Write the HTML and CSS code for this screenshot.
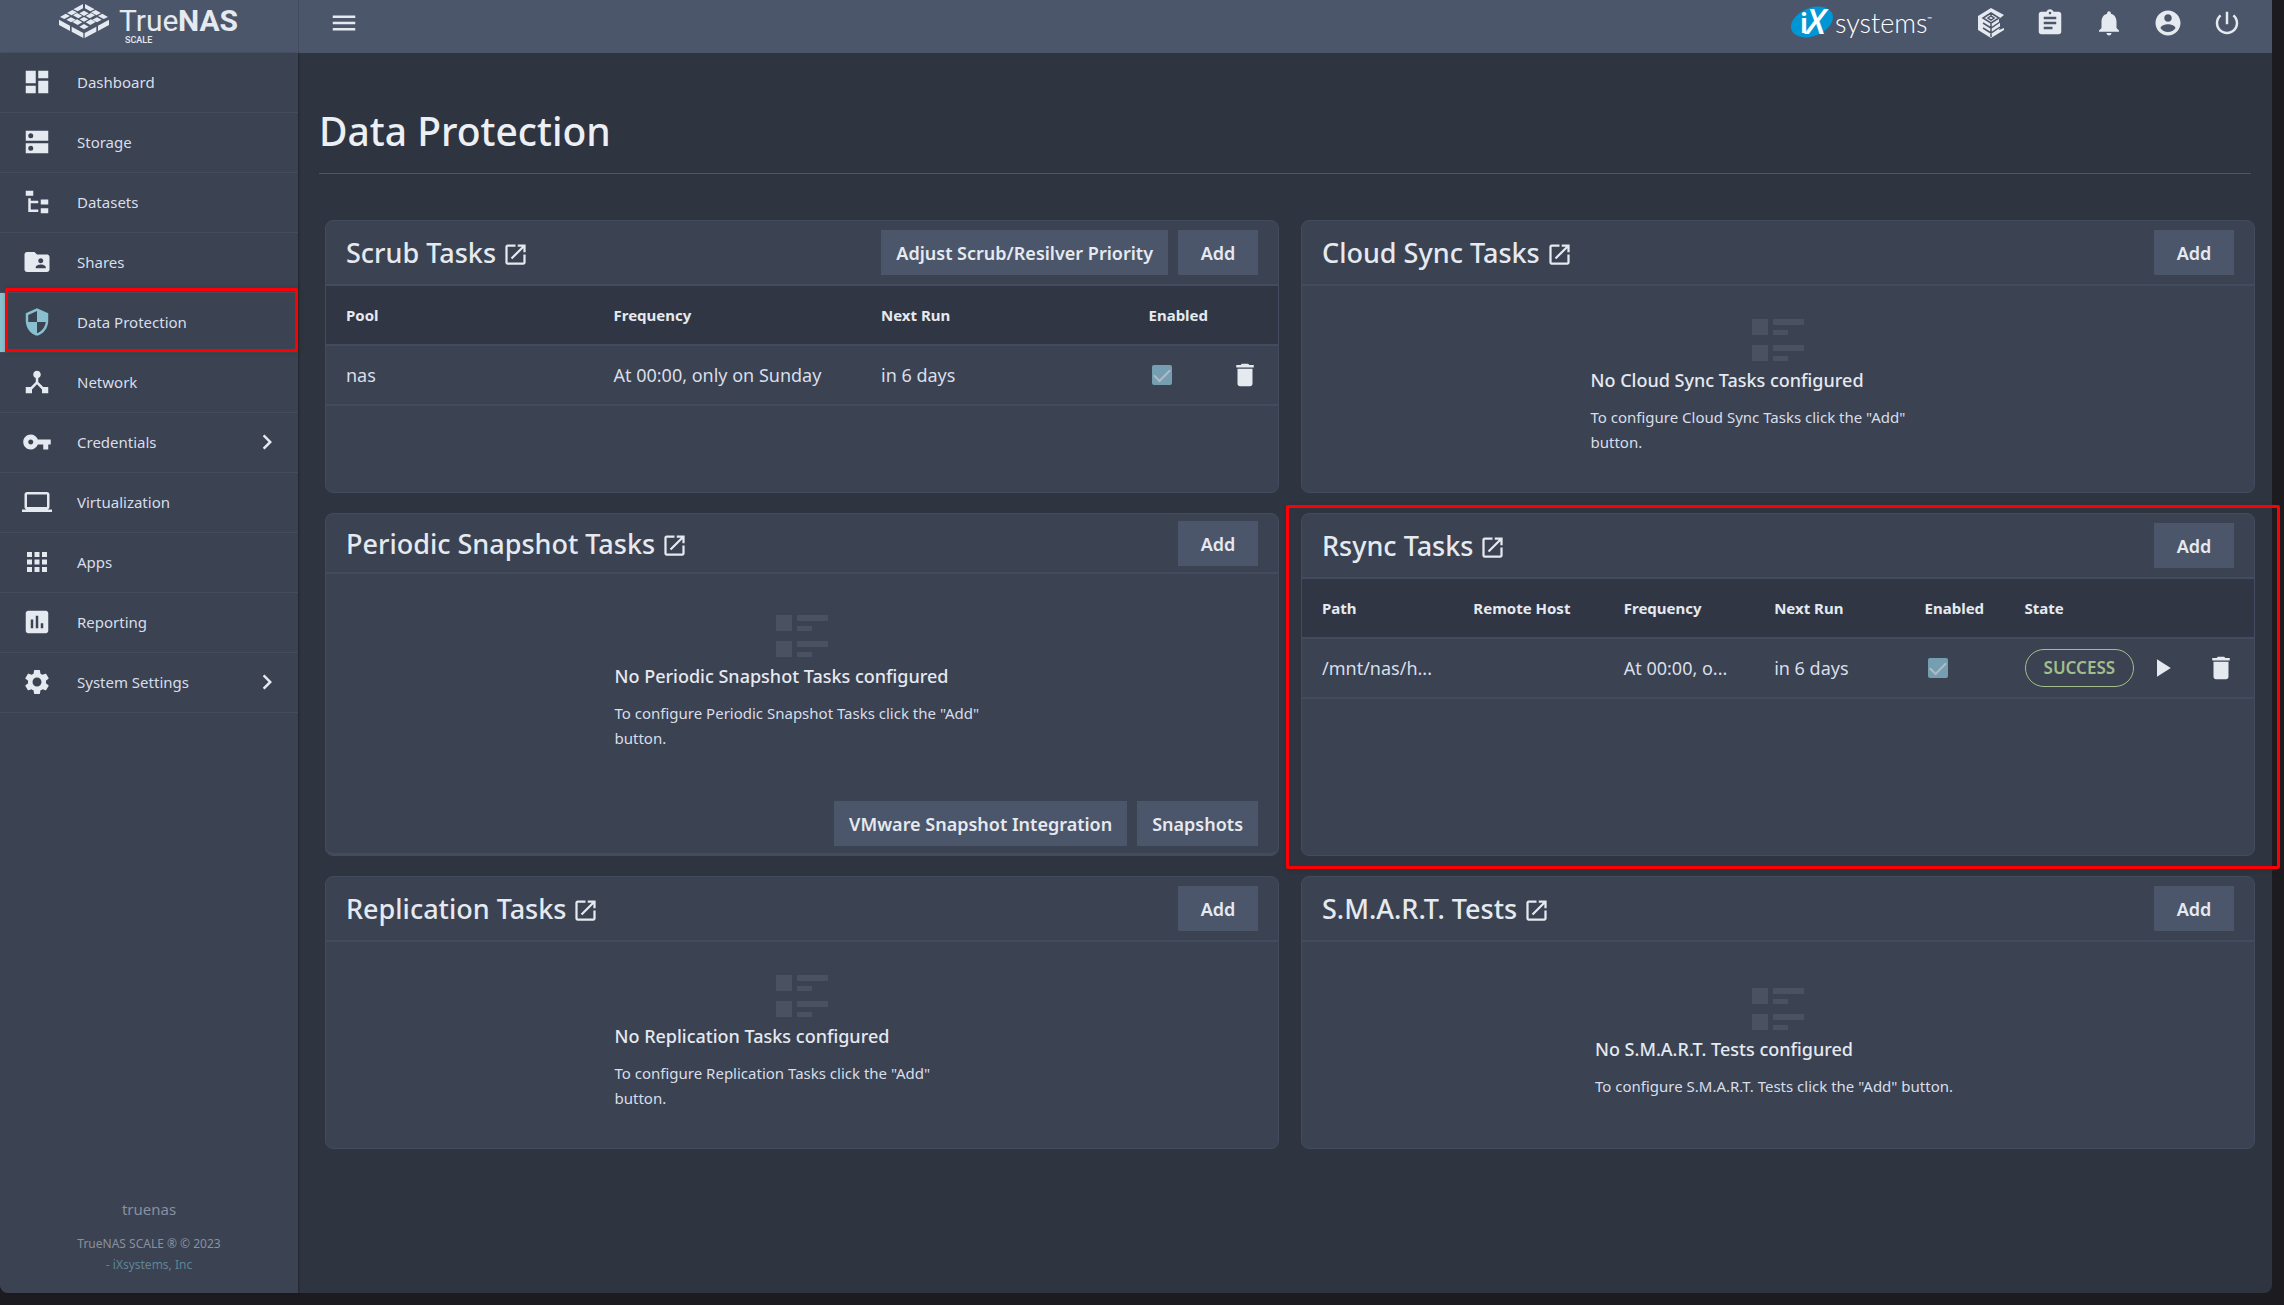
FILE: index.html
```html
<!DOCTYPE html>
<html lang="en">
<head>
<meta charset="utf-8">
<meta name="viewport" content="width=device-width, initial-scale=1">
<title>TrueNAS - Data Protection</title>
<link rel="stylesheet" href="styles.css">
</head>
<body>
<svg class="sprite" aria-hidden="true">
  <symbol id="i-dashboard" viewBox="0 0 24 24"><path d="M3 13h8V3H3v10zm0 8h8v-6H3v6zm10 0h8V11h-8v10zm0-18v6h8V3h-8z"/></symbol>
  <symbol id="i-storage" viewBox="0 0 24 24"><path fill-rule="evenodd" d="M3 3h18v8H3zM7 5a2 2 0 1 0 0 4 2 2 0 0 0 0-4zM3 13h18v8H3zM7 15a2 2 0 1 0 0 4 2 2 0 0 0 0-4z"/></symbol>
  <symbol id="i-datasets" viewBox="0 0 24 24"><path d="M3 3h6v4H3zM5 9h2v2h6v2H7v5h6v2H5zM15 10h6v4h-6zM15 17h6v4h-6z"/></symbol>
  <symbol id="i-shares" viewBox="0 0 24 24"><path d="M20 6h-8l-2-2H4c-1.1 0-1.99.9-1.99 2L2 18c0 1.1.9 2 2 2h16c1.1 0 2-.9 2-2V8c0-1.1-.9-2-2-2zm-5 3c1.1 0 2 .9 2 2s-.9 2-2 2-2-.9-2-2 .9-2 2-2zm4 8h-8v-1c0-1.33 2.67-2 4-2s4 .67 4 2v1z"/></symbol>
  <symbol id="i-security" viewBox="0 0 24 24"><path d="M12 1L3 5v6c0 5.55 3.84 10.74 9 12 5.16-1.26 9-6.45 9-12V5l-9-4zm0 10.99h7c-.53 4.12-3.28 7.79-7 8.94V12H5V6.3l7-3.11v8.8z"/></symbol>
  <symbol id="i-network" viewBox="0 0 24 24"><path d="M17 16l-4-4V8.82C14.16 8.4 15 7.3 15 6c0-1.66-1.34-3-3-3S9 4.34 9 6c0 1.3.84 2.4 2 2.82V12l-4 4H3v5h5v-3.05l4-4.2 4 4.2V21h5v-5h-4z"/></symbol>
  <symbol id="i-key" viewBox="0 0 24 24"><path d="M12.65 10C11.83 7.67 9.61 6 7 6c-3.31 0-6 2.69-6 6s2.69 6 6 6c2.61 0 4.83-1.67 5.65-4H17v4h4v-4h2v-4H12.65zM7 14c-1.1 0-2-.9-2-2s.9-2 2-2 2 .9 2 2-.9 2-2 2z"/></symbol>
  <symbol id="i-laptop" viewBox="0 0 24 24"><path d="M20 18c1.1 0 1.99-.9 1.99-2L22 6c0-1.1-.9-2-2-2H4c-1.1 0-2 .9-2 2v10c0 1.1.9 2 2 2H0v2h24v-2h-4zM4 6h16v10H4V6z"/></symbol>
  <symbol id="i-apps" viewBox="0 0 24 24"><path d="M4 8h4V4H4v4zm6 12h4v-4h-4v4zm-6 0h4v-4H4v4zm0-6h4v-4H4v4zm6 0h4v-4h-4v4zm6-10v4h4V4h-4zm-6 4h4V4h-4v4zm6 6h4v-4h-4v4zm0 6h4v-4h-4v4z"/></symbol>
  <symbol id="i-chart" viewBox="0 0 24 24"><path d="M19 3H5c-1.1 0-2 .9-2 2v14c0 1.1.9 2 2 2h14c1.1 0 2-.9 2-2V5c0-1.1-.9-2-2-2zM9 17H7v-7h2v7zm4 0h-2V7h2v10zm4 0h-2v-4h2v4z"/></symbol>
  <symbol id="i-settings" viewBox="0 0 24 24"><path d="M19.14 12.94c.04-.3.06-.61.06-.94 0-.32-.02-.64-.07-.94l2.03-1.58c.18-.14.23-.41.12-.61l-1.92-3.32c-.12-.22-.37-.29-.59-.22l-2.39.96c-.5-.38-1.03-.7-1.62-.94L14.4 2.81c-.04-.24-.24-.41-.48-.41h-3.84c-.24 0-.43.17-.47.41l-.36 2.54c-.59.24-1.13.57-1.62.94l-2.39-.96c-.22-.08-.47 0-.59.22L2.74 8.87c-.12.21-.08.47.12.61l2.03 1.58c-.05.3-.09.63-.09.94s.02.64.07.94l-2.03 1.58c-.18.14-.23.41-.12.61l1.92 3.32c.12.22.37.29.59.22l2.39-.96c.5.38 1.03.7 1.62.94l.36 2.54c.05.24.24.41.48.41h3.84c.24 0 .44-.17.47-.41l.36-2.54c.59-.24 1.13-.56 1.62-.94l2.39.96c.22.08.47 0 .59-.22l1.92-3.32c.12-.22.07-.47-.12-.61l-2.01-1.58zM12 15.6c-1.98 0-3.6-1.62-3.6-3.6s1.62-3.6 3.6-3.6 3.6 1.62 3.6 3.6-1.62 3.6-3.6 3.6z"/></symbol>
  <symbol id="i-chevron" viewBox="0 0 24 24"><path d="M10 6L8.59 7.41 13.17 12l-4.58 4.59L10 18l6-6z"/></symbol>
  <symbol id="i-open" viewBox="0 0 24 24"><path d="M19 19H5V5h7V3H5c-1.11 0-2 .9-2 2v14c0 1.1.89 2 2 2h14c1.1 0 2-.9 2-2v-7h-2v7zM14 3v2h3.59l-9.83 9.83 1.41 1.41L19 6.41V10h2V3h-7z"/></symbol>
  <symbol id="i-menu" viewBox="0 0 24 24"><path d="M3 18h18v-2H3v2zm0-5h18v-2H3v2zm0-7v2h18V6H3z"/></symbol>
  <symbol id="i-tasks" viewBox="0 0 24 24"><path d="M19 3h-4.18C14.4 1.84 13.3 1 12 1c-1.3 0-2.4.84-2.82 2H5c-1.1 0-2 .9-2 2v14c0 1.1.9 2 2 2h14c1.1 0 2-.9 2-2V5c0-1.1-.9-2-2-2zm-7 0c.55 0 1 .45 1 1s-.45 1-1 1-1-.45-1-1 .45-1 1-1zm2 14H7v-2h7v2zm3-4H7v-2h10v2zm0-4H7V7h10v2z"/></symbol>
  <symbol id="i-bell" viewBox="0 0 24 24"><path d="M12 22c1.1 0 2-.9 2-2h-4c0 1.1.89 2 2 2zm6-6v-5c0-3.07-1.64-5.64-4.5-6.32V4c0-.83-.67-1.5-1.5-1.5s-1.5.67-1.5 1.5v.68C7.63 5.36 6 7.92 6 11v5l-2 2v1h16v-1l-2-2z"/></symbol>
  <symbol id="i-account" viewBox="0 0 24 24"><path d="M12 2C6.48 2 2 6.48 2 12s4.48 10 10 10 10-4.48 10-10S17.52 2 12 2zm0 3c1.66 0 3 1.34 3 3s-1.34 3-3 3-3-1.34-3-3 1.34-3 3-3zm0 14.2c-2.5 0-4.71-1.28-6-3.22.03-1.99 4-3.08 6-3.08 1.99 0 5.97 1.09 6 3.08-1.29 1.94-3.5 3.22-6 3.22z"/></symbol>
  <symbol id="i-power" viewBox="0 0 24 24"><path d="M13 3h-2v10h2V3zm4.83 2.17l-1.42 1.42C17.99 7.86 19 9.81 19 12c0 3.87-3.13 7-7 7s-7-3.13-7-7c0-2.19 1.01-4.14 2.58-5.42L6.17 5.17C4.23 6.82 3 9.26 3 12c0 4.97 4.03 9 9 9s9-4.03 9-9c0-2.74-1.23-5.18-3.17-6.83z"/></symbol>
  <symbol id="i-delete" viewBox="0 0 24 24"><path d="M6 19c0 1.1.9 2 2 2h8c1.1 0 2-.9 2-2V7H6v12zM19 4h-3.5l-1-1h-5l-1 1H5v2h14V4z"/></symbol>
  <symbol id="i-play" viewBox="0 0 24 24"><path d="M8 5v14l11-7z"/></symbol>
  <symbol id="i-list" viewBox="0 0 52 42"><path d="M0 0h16v16H0zM21 0h31v6H21zM21 11h15v5H21zM0 26h16v16H0zM21 26h31v6H21zM21 37h15v5H21z"/></symbol>
  <symbol id="i-truecommand" viewBox="0 0 30 30">
    <path d="M15 0l13 7-5 4v3l1 1v4l-1 3 5-2v2L15 30 2 22V8z"/>
    <path class="cut" d="M15 5l8 5-8 5-8-5zM15 5v4M15 15v14M12 10l3-2 3 2-3 2zM7 15l8 5 9-6M7 20l8 5 9-6"/>
  </symbol>
</svg>

<div class="window">
  <header class="topbar">
    <a class="brand" href="#" aria-label="TrueNAS SCALE">
      <svg class="brand-logo" viewBox="0 0 180 44">
        <g transform="translate(0 3) scale(.3333)">
          <path d="M72 0v13L56 22l-13-6zM78 0v13l16 9 13-6zM75 20l14 8-14 8-14-8zM40 18l14 7-16 9-14-7zM110 18l-14 7 16 9 14-7zM54 27l16 9-12 7-16-9zM96 27l-16 9 12 7 16-9z"/>
          <path d="M20 29l13 7-17 9-13-6zM130 29l-13 7 17 9 13-6zM36 40l14 7-14 8-14-8zM114 40l14 7-14 8-14-8zM75 39l13 7-13 7-13-7zM54 46l16 9-14 8-16-9zM96 46l-16 9 14 8 16-9z"/>
          <path d="M0 47l33 18v16L0 63zM150 47l-33 18v16l33-18zM75 60l14 8-14 8-14-8zM38 68l35 19v15L38 83zM112 68L77 87v15l35-19z"/>
        </g>
        <text class="logo-light" x="60" y="30">True</text>
        <text class="logo-bold" x="119" y="30">NAS</text>
        <text class="logo-small" x="66" y="42">SCALE</text>
      </svg>
    </a>
    <div class="topbar-main">
      <button class="icon-btn" type="button" aria-label="Toggle menu"><svg class="icon"><use href="#i-menu"/></svg></button>
      <nav class="topbar-actions" aria-label="Account">
        <a class="ix" href="#" aria-label="iXsystems">
          <svg class="ix-logo" viewBox="0 0 142 40">
            <ellipse class="ix-oval" cx="21" cy="19" rx="22" ry="14" transform="rotate(-22 21 19)"/>
            <text class="ix-i" x="9" y="30">i</text>
            <text class="ix-x" x="15" y="31">X</text>
            <text class="ix-name" x="44" y="30">systems</text>
            <text class="ix-tm" x="136" y="18">™</text>
          </svg>
        </a>
        <button class="icon-btn" type="button" aria-label="TrueCommand"><svg class="icon"><use href="#i-truecommand"/></svg></button>
        <button class="icon-btn" type="button" aria-label="Task manager"><svg class="icon"><use href="#i-tasks"/></svg></button>
        <button class="icon-btn" type="button" aria-label="Alerts"><svg class="icon"><use href="#i-bell"/></svg></button>
        <button class="icon-btn" type="button" aria-label="Account"><svg class="icon"><use href="#i-account"/></svg></button>
        <button class="icon-btn" type="button" aria-label="Power"><svg class="icon"><use href="#i-power"/></svg></button>
      </nav>
    </div>
  </header>

  <div class="shell">
    <aside class="sidebar">
      <nav aria-label="Main">
        <ul class="menu">
          <li class="menu-item"><a href="#"><svg class="icon"><use href="#i-dashboard"/></svg>Dashboard</a></li>
          <li class="menu-item"><a href="#"><svg class="icon"><use href="#i-storage"/></svg>Storage</a></li>
          <li class="menu-item"><a href="#"><svg class="icon"><use href="#i-datasets"/></svg>Datasets</a></li>
          <li class="menu-item"><a href="#"><svg class="icon"><use href="#i-shares"/></svg>Shares</a></li>
          <li class="menu-item active"><a href="#" aria-current="page"><svg class="icon"><use href="#i-security"/></svg>Data Protection</a><span class="marker marker-menu" aria-hidden="true"></span></li>
          <li class="menu-item"><a href="#"><svg class="icon"><use href="#i-network"/></svg>Network</a></li>
          <li class="menu-item"><a href="#"><svg class="icon"><use href="#i-key"/></svg>Credentials<svg class="icon chevron"><use href="#i-chevron"/></svg></a></li>
          <li class="menu-item"><a href="#"><svg class="icon"><use href="#i-laptop"/></svg>Virtualization</a></li>
          <li class="menu-item"><a href="#"><svg class="icon"><use href="#i-apps"/></svg>Apps</a></li>
          <li class="menu-item"><a href="#"><svg class="icon"><use href="#i-chart"/></svg>Reporting</a></li>
          <li class="menu-item"><a href="#"><svg class="icon"><use href="#i-settings"/></svg>System Settings<svg class="icon chevron"><use href="#i-chevron"/></svg></a></li>
        </ul>
      </nav>
      <footer class="sidebar-footer">
        <p class="host">truenas</p>
        <p>TrueNAS SCALE ® © 2023</p>
        <p><a href="#">- iXsystems, Inc</a></p>
      </footer>
    </aside>

    <main class="content">
      <div class="page-head"><h1>Data Protection</h1></div>

      <div class="cards">
        <section class="card">
          <div class="card-head">
            <h2><a href="#">Scrub Tasks <svg class="icon-open"><use href="#i-open"/></svg></a></h2>
            <div class="actions">
              <button class="btn" type="button">Adjust Scrub/Resilver Priority</button>
              <button class="btn btn-add" type="button">Add</button>
            </div>
          </div>
          <table class="table scrub">
            <colgroup><col class="c-pool"><col class="c-wide"><col class="c-wide"><col class="c-check"><col></colgroup>
            <thead><tr><th>Pool</th><th>Frequency</th><th>Next Run</th><th>Enabled</th><th aria-label="Actions"></th></tr></thead>
            <tbody><tr>
              <td>nas</td><td>At 00:00, only on Sunday</td><td>in 6 days</td>
              <td><input class="check" type="checkbox" aria-label="Scrub task enabled" checked disabled></td>
              <td><div class="row-actions"><button type="button" aria-label="Delete scrub task"><svg class="icon"><use href="#i-delete"/></svg></button></div></td>
            </tr></tbody>
          </table>
        </section>

        <section class="card">
          <div class="card-head">
            <h2><a href="#">Cloud Sync Tasks <svg class="icon-open"><use href="#i-open"/></svg></a></h2>
            <button class="btn btn-add" type="button">Add</button>
          </div>
          <div class="card-body">
            <div class="empty">
              <svg class="icon-list"><use href="#i-list"/></svg>
              <h3>No Cloud Sync Tasks configured</h3>
              <p>To configure Cloud Sync Tasks click the "Add" button.</p>
            </div>
          </div>
        </section>

        <section class="card tall">
          <div class="card-head compact">
            <h2><a href="#">Periodic Snapshot Tasks <svg class="icon-open"><use href="#i-open"/></svg></a></h2>
            <button class="btn btn-add" type="button">Add</button>
          </div>
          <div class="card-body">
            <div class="empty">
              <svg class="icon-list"><use href="#i-list"/></svg>
              <h3>No Periodic Snapshot Tasks configured</h3>
              <p>To configure Periodic Snapshot Tasks click the "Add" button.</p>
            </div>
          </div>
          <div class="card-foot">
            <button class="btn" type="button">VMware Snapshot Integration</button>
            <button class="btn" type="button">Snapshots</button>
          </div>
        </section>

        <section class="card tall">
          <div class="card-head">
            <h2><a href="#">Rsync Tasks <svg class="icon-open"><use href="#i-open"/></svg></a></h2>
            <button class="btn btn-add" type="button">Add</button>
          </div>
          <table class="table rsync">
            <colgroup><col class="c-path"><col class="c-mid"><col class="c-mid"><col class="c-mid"><col class="c-enabled"><col class="c-state"><col></colgroup>
            <thead><tr><th>Path</th><th>Remote Host</th><th>Frequency</th><th>Next Run</th><th>Enabled</th><th>State</th><th aria-label="Actions"></th></tr></thead>
            <tbody><tr>
              <td>/mnt/nas/h...</td><td></td><td>At 00:00, o...</td><td>in 6 days</td>
              <td><input class="check" type="checkbox" aria-label="Rsync task enabled" checked disabled></td>
              <td><button class="state" type="button">SUCCESS</button></td>
              <td><div class="row-actions"><button type="button" aria-label="Run rsync task"><svg class="icon"><use href="#i-play"/></svg></button><button type="button" aria-label="Delete rsync task"><svg class="icon"><use href="#i-delete"/></svg></button></div></td>
            </tr></tbody>
          </table>
          <span class="marker marker-card" aria-hidden="true"></span>
        </section>

        <section class="card">
          <div class="card-head">
            <h2><a href="#">Replication Tasks <svg class="icon-open"><use href="#i-open"/></svg></a></h2>
            <button class="btn btn-add" type="button">Add</button>
          </div>
          <div class="card-body">
            <div class="empty">
              <svg class="icon-list"><use href="#i-list"/></svg>
              <h3>No Replication Tasks configured</h3>
              <p>To configure Replication Tasks click the "Add" button.</p>
            </div>
          </div>
        </section>

        <section class="card">
          <div class="card-head">
            <h2><a href="#">S.M.A.R.T. Tests <svg class="icon-open"><use href="#i-open"/></svg></a></h2>
            <button class="btn btn-add" type="button">Add</button>
          </div>
          <div class="card-body">
            <div class="empty">
              <svg class="icon-list"><use href="#i-list"/></svg>
              <h3>No S.M.A.R.T. Tests configured</h3>
              <p>To configure S.M.A.R.T. Tests click the "Add" button.</p>
            </div>
          </div>
        </section>
      </div>
    </main>
  </div>
</div>
</body>
</html>
```
FILE: styles.css
```css
:root {
  --desk: #1c1b20;
  --bg1: #2e3440;
  --bg2: #3b4252;
  --lines: #434c5e;
  --bar: #4c566a;
  --fg1: #e5e9f0;
  --fg2: #d8dee9;
  --primary: #88c0d0;
  --green: #a3be8c;
  --marker: #fb0007;
}

* { box-sizing: border-box; }

body {
  margin: 0;
  min-height: 100vh;
  display: flex;
  padding: 0 12px 12px 0;
  background: var(--desk);
  color: var(--fg1);
  font: 15px/24px "Noto Sans", sans-serif;
}

h1, h2, h3, p, ul { margin: 0; padding: 0; }
a { color: inherit; text-decoration: none; }
button { font: inherit; color: inherit; background: none; border: 0; padding: 0; }

.sprite { position: absolute; width: 0; height: 0; }
.icon { width: 30px; height: 30px; fill: currentColor; flex: none; display: block; }
.cut { fill: none; stroke: var(--bar); stroke-width: 1.5; }

.window {
  flex: 1;
  min-width: 0;
  display: flex;
  flex-direction: column;
  background: var(--bg1);
  border-radius: 0 0 8px 8px;
}

/* Top bar */
.topbar { display: flex; height: 53px; background: var(--bar); }
.brand {
  width: 299px;
  flex: none;
  padding: 0 0 7px;
  display: flex;
  align-items: center;
  justify-content: center;
  border-right: 1px solid #434c5e;
}
.brand-logo { width: 180px; height: 44px; fill: var(--fg1); font-family: Roboto, sans-serif; }
.logo-light { font-size: 30px; font-weight: 400; }
.logo-bold { font-size: 30px; font-weight: 700; }
.logo-small { font-size: 9px; font-weight: 500; }
.topbar-main {
  flex: 1;
  display: flex;
  align-items: center;
  justify-content: space-between;
  padding: 0 20px 7px;
}
.topbar-actions { display: flex; align-items: center; gap: 9px; }
.icon-btn { width: 50px; height: 46px; display: grid; place-items: center; }
.ix { margin-right: 24px; }
.ix-logo { display: block; width: 142px; height: 40px; fill: #fff; overflow: visible; }
.ix-oval { fill: #0095d5; }
.ix-i { font: 700 26px "Open Sans", sans-serif; }
.ix-x { font: italic 600 35px "Open Sans", sans-serif; }
.ix-name { font: 300 27px Lato, sans-serif; }
.ix-tm { font: 6px Lato, sans-serif; }

/* Sidebar */
.shell { flex: 1; display: flex; }
.sidebar {
  width: 298px;
  flex: none;
  display: flex;
  flex-direction: column;
  justify-content: space-between;
  background: var(--bg2);
  border-radius: 0 0 0 8px;
  box-shadow: 1px 0 2px rgba(0, 0, 0, .25);
}
.menu { list-style: none; }
.menu-item { position: relative; height: 60px; border-bottom: 1px solid var(--lines); }
.menu-item a {
  height: 100%;
  display: flex;
  align-items: center;
  gap: 25px;
  padding: 0 16px 2px 22px;
  color: var(--fg2);
}
.menu-item .icon { color: var(--fg1); }
.menu-item .chevron { margin-left: auto; }
.active a { box-shadow: inset 5px 0 var(--primary); }
.active .icon { color: var(--primary); }
.sidebar-footer { padding-bottom: 18px; text-align: center; font-size: 12px; line-height: 21px; color: #8a909e; }
.sidebar-footer a { color: #5f8596; }
.host { font-size: 15px; margin-bottom: 13px; }

/* Hand-placed highlight frames */
.marker { position: absolute; border: 3px solid var(--marker); border-radius: 2px; pointer-events: none; z-index: 1; box-shadow: 1px 1px 4px rgba(40, 50, 20, .4); }
.marker-menu { inset: -5px 0 0 5px; }
.marker-card { inset: -9px -26px -14px -16px; }

/* Page */
.content { flex: 1; min-width: 0; padding-top: 51px; }
.page-head { margin: 0 21px 46px; padding-bottom: 15px; border-bottom: 1px solid var(--bar); }
.page-head h1 { font-size: 39px; line-height: 54px; font-weight: 500; color: #eceff4; }
.cards {
  display: grid;
  grid-template-columns: repeat(2, minmax(0, 1fr));
  gap: 20px 22px;
  padding: 0 17px 30px 27px;
}

/* Cards */
.card {
  position: relative;
  display: flex;
  flex-direction: column;
  min-height: 273px;
  background: var(--bg2);
  border: 1px solid var(--lines);
  border-radius: 8px;
}
.card.tall { min-height: 343px; }
.card-head {
  display: flex;
  align-items: center;
  justify-content: space-between;
  padding: 9px 20px;
  border-bottom: 2px solid var(--lines);
}
.card-head.compact { padding: 7px 20px 6px; }
.card-head h2 { font-size: 27px; line-height: 45px; font-weight: 500; }
.card-head h2 a { display: flex; align-items: center; gap: 6px; }
.icon-open { width: 27px; height: 27px; fill: currentColor; margin-top: 4px; }
.actions { display: flex; gap: 10px; }
.btn { height: 45px; padding: 0 15px; background: var(--bar); font-size: 18px; font-weight: 600; white-space: nowrap; }
.btn-add { min-width: 80px; }
.card-body { flex: 1; display: flex; align-items: center; justify-content: center; }
.card-foot { display: flex; justify-content: flex-end; gap: 10px; padding: 6px 20px 7px; border-bottom: 2px solid var(--lines); border-radius: 0 0 8px 8px; }

.empty { max-width: 375px; padding-bottom: 4px; display: flex; flex-direction: column; }
.icon-list { width: 52px; height: 42px; fill: #4a5161; align-self: center; }
.empty h3 { margin: 6px 0 12px; font-size: 18px; line-height: 26px; font-weight: 500; }
.empty p { padding-right: 8px; line-height: 25px; color: var(--fg2); }

/* Tables */
.table { width: 100%; table-layout: fixed; border-collapse: separate; border-spacing: 0; }
.table th, .table td { height: 60px; padding: 0; text-align: left; border-bottom: 2px solid var(--lines); white-space: nowrap; }
.table th { background: #303643; font-weight: 700; }
.table td { font-size: 18px; color: var(--fg2); }
.table th:first-child, .table td:first-child { padding-left: 20px; }
.c-pool { width: 30.2%; }
.c-wide { width: 28.1%; }
.c-check { width: 6.5%; }
.c-path { width: 18%; }
.c-mid { width: 15.8%; }
.c-enabled { width: 10.5%; }
.c-state { width: 12%; }
.check {
  appearance: none;
  display: grid;
  place-items: center;
  width: 20px;
  height: 20px;
  margin: 0 3px;
  border-radius: 2px;
  background: #759eb0;
}
.check::before {
  content: "";
  width: 14px;
  height: 7px;
  margin-top: -4px;
  border: solid #b3bac7;
  border-width: 0 0 2px 2px;
  transform: rotate(-45deg);
}
.state {
  display: block;
  height: 38px;
  padding: 0 18px;
  border: 1px solid var(--green);
  border-radius: 19px;
  color: var(--green);
  font-size: 17px;
  font-weight: 600;
}
.row-actions { display: flex; justify-content: flex-end; gap: 29px; padding-right: 18px; color: var(--fg1); }
```
